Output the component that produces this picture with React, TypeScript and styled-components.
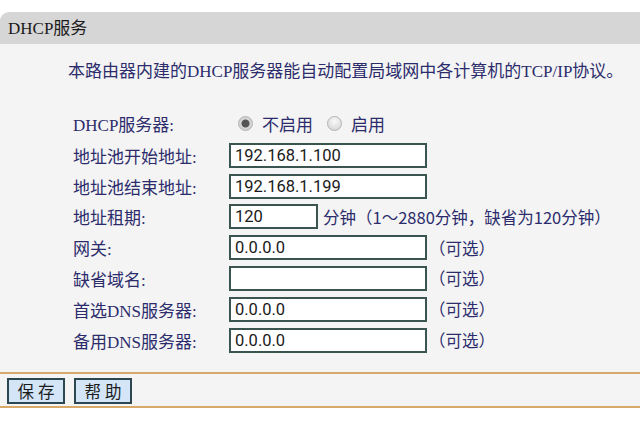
import { Fragment } from 'react';
import styled, { createGlobalStyle } from 'styled-components';

const GlobalStyle = createGlobalStyle`
    html, body {
        margin: 0;
        padding: 0;
        background: #ffffff;
    }
    body {
        font-family: "Liberation Serif", "Noto Sans CJK SC", serif;
    }
`;

const Page = styled.div`
    width: 640px;
    height: 433px;
    padding-top: 12px;
    box-sizing: border-box;
    background: #ffffff;
    overflow: hidden;
`;

const TitleBar = styled.div`
    height: 32px;
    background: #d6d6d6;
    border-top-left-radius: 9px;
    padding: 1px 0 0 8px;
    box-sizing: border-box;
    font-size: 17px;
    line-height: 32px;
    color: #1c1c1c;
`;

const Body = styled.div`
    background: #f4f4f4;
    height: 328px;
    padding-top: 17px;
    box-sizing: border-box;
`;

const Intro = styled.p`
    margin: 0 0 27px 68px;
    font-size: 17px;
    line-height: 22px;
    color: #2c2c6c;
`;

const Form = styled.div`
    display: grid;
    grid-template-columns: 156px 1fr;
    grid-template-rows: 27px repeat(7, 25px);
    row-gap: 5.8px;
    margin-left: 73px;
`;

const Label = styled.div`
    display: flex;
    align-items: center;
    font-size: 17px;
    color: #2c2c6c;
`;

const Field = styled.div`
    display: flex;
    align-items: center;
`;

const TextBox = styled.input<{ $w?: number }>`
    width: ${p => p.$w ?? 198}px;
    height: 25px;
    box-sizing: border-box;
    border: 2px solid #3a554f;
    background: #ffffff;
    padding: 0 4px;
    margin: 0;
    font-family: Roboto, "Noto Sans CJK SC", sans-serif;
    font-size: 16.5px;
    color: #1a1a1a;
    outline: none;
`;

const Note = styled.span<{ $gap?: number }>`
    margin-left: ${p => p.$gap ?? 5}px;
    font-family: "Noto Sans CJK SC", sans-serif;
    font-size: 16.5px;
    color: #2c2c6c;
    white-space: nowrap;
`;

const RadioGroup = styled.div`
    display: flex;
    align-items: center;
    padding-left: 9px;
`;

const Radio = styled.span<{ $on?: boolean }>`
    width: 15px;
    height: 15px;
    border-radius: 50%;
    box-sizing: border-box;
    border: 1px solid #b4b4b4;
    background: ${p =>
        p.$on
            ? 'radial-gradient(circle, #555 0 3.5px, #d8d8d8 4.5px, #c4c4c4 100%)'
            : 'radial-gradient(circle at 50% 35%, #fafafa 0, #dcdcdc 70%, #cfcfcf 100%)'};
    flex: none;
`;

const RadioText = styled.span<{ $gap?: number }>`
    margin: 0 ${p => p.$gap ?? 0}px 0 9px;
    font-family: "Noto Sans CJK SC", sans-serif;
    font-size: 17px;
    color: #2c2c6c;
`;

const Toolbar = styled.div`
    height: 36px;
    box-sizing: border-box;
    border-top: 2px solid #d9a96a;
    border-bottom: 2px solid #d9a96a;
    background: #f4f4f4;
    display: flex;
    align-items: center;
    gap: 9px;
    padding: 1px 0 0 7px;
`;

const Button = styled.button`
    width: 58px;
    height: 26px;
    box-sizing: border-box;
    border: 2px solid #2d4750;
    background: #d3e5f7;
    padding: 0;
    font-family: "Noto Sans CJK SC", sans-serif;
    font-size: 16.5px;
    letter-spacing: 4px;
    text-indent: 4px;
    color: #1c1c1c;
    line-height: 22px;
`;

const rows: { label: string; value: string; note?: string; w?: number }[] = [
    { label: '地址池开始地址:', value: '192.168.1.100' },
    { label: '地址池结束地址:', value: '192.168.1.199' },
    { label: '地址租期:', value: '120', w: 89, note: '分钟（1～2880分钟，缺省为120分钟）' },
    { label: '网关:', value: '0.0.0.0', note: '（可选）' },
    { label: '缺省域名:', value: '', note: '（可选）' },
    { label: '首选DNS服务器:', value: '0.0.0.0', note: '（可选）' },
    { label: '备用DNS服务器:', value: '0.0.0.0', note: '（可选）' },
];

export default function App() {
    return (
        <Page>
            <GlobalStyle />
            <TitleBar>DHCP服务</TitleBar>
            <Body>
                <Intro>本路由器内建的DHCP服务器能自动配置局域网中各计算机的TCP/IP协议。</Intro>
                <Form>
                    <Label>DHCP服务器:</Label>
                    <RadioGroup>
                        <Radio $on />
                        <RadioText $gap={14}>不启用</RadioText>
                        <Radio />
                        <RadioText>启用</RadioText>
                    </RadioGroup>
                    {rows.map(r => (
                        <Fragment key={r.label}>
                            <Label>{r.label}</Label>
                            <Field>
                                <TextBox $w={r.w} value={r.value} readOnly />
                                {r.note && <Note $gap={r.w ? 5 : 2}>{r.note}</Note>}
                            </Field>
                        </Fragment>
                    ))}
                </Form>
            </Body>
            <Toolbar>
                <Button>保存</Button>
                <Button>帮助</Button>
            </Toolbar>
        </Page>
    );
}
